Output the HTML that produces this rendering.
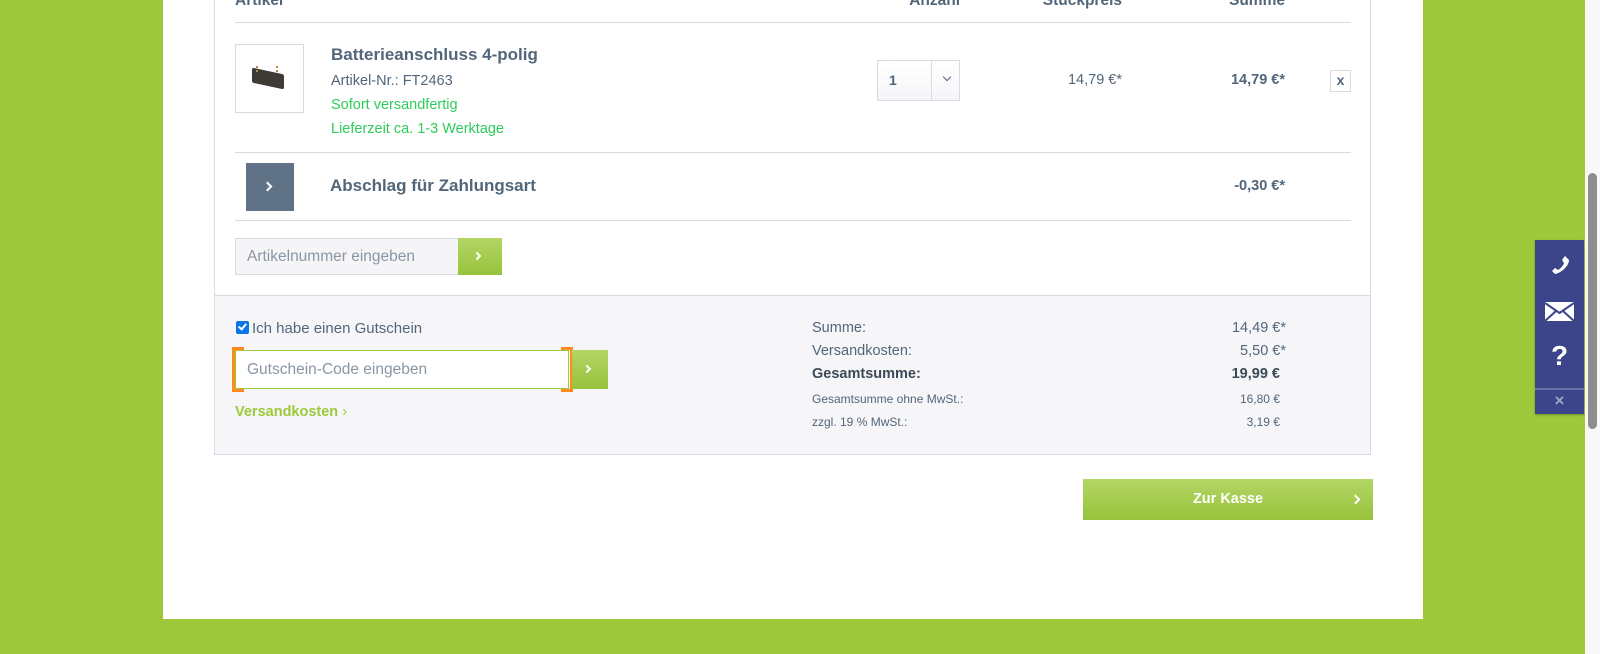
<!DOCTYPE html>
<html><head><meta charset="utf-8"><style>
*{box-sizing:border-box;margin:0;padding:0}
body{width:1600px;height:654px;overflow:hidden;background:#9cc83a;font-family:"Liberation Sans",Arial,sans-serif;color:#52667a;position:relative}
.a{position:absolute}
.panel{left:163px;top:0;width:1260px;height:619px;background:#fff}
.box{left:214px;top:-2px;width:1157px;height:457px;border:1px solid #dadae5;border-top:none}
.foot{left:215px;top:295px;width:1155px;height:159px;background:#f6f6f9;border-top:1px solid #dadae5}
.line{height:1px;background:#dadae5;left:235px;width:1116px}
.hd{font-weight:bold;font-size:15.5px;color:#52667a;top:-8px}
.r{text-align:right}
.btn{background:linear-gradient(#b3d666,#98c23b);color:#fff}
.chev{display:block;width:7px;height:7px;border-right:2px solid #fff;border-top:2px solid #fff;transform:rotate(45deg)}
</style></head><body>
<div class="a panel"></div>
<div class="a box"></div>
<div class="a foot"></div>

<div class="a hd" style="left:235px">Artikel</div>
<div class="a hd r" style="left:850px;width:110px">Anzahl</div>
<div class="a hd r" style="left:990px;width:132px">Stückpreis</div>
<div class="a hd r" style="left:1170px;width:115px">Summe</div>
<div class="a line" style="top:22px"></div>

<div class="a" style="left:235px;top:44px;width:69px;height:69px;border:1px solid #dadae5;background:#fff">
<div class="a" style="left:16px;top:26px;width:32px;height:15px;background:#3e3a36;transform:skewY(12deg);border-radius:2px"></div>
<div class="a" style="left:20px;top:21px;width:22px;height:6px;border-left:2px dotted #b08a50;border-right:2px dotted #b08a50"></div>
</div>
<div class="a" style="left:331px;top:45px;font-size:17px;font-weight:bold">Batterieanschluss 4-polig</div>
<div class="a" style="left:331px;top:73px;font-size:14.5px">Artikel-Nr.: FT2463</div>
<div class="a" style="left:331px;top:97px;font-size:14.5px;color:#2ecc5a">Sofort versandfertig</div>
<div class="a" style="left:331px;top:121px;font-size:14.5px;color:#2ecc5a">Lieferzeit ca. 1-3 Werktage</div>

<div class="a" style="left:877px;top:60px;width:83px;height:41px;border:1px solid #dadae5;background:linear-gradient(#fff,#f5f5f8)">
<div class="a" style="left:11px;top:11px;font-size:14px;font-weight:bold">1</div>
<div class="a" style="left:53px;top:0;width:1px;height:39px;background:#dadae5"></div>
<div class="a" style="left:66px;top:13px;width:6px;height:6px;border-right:1.5px solid #52667a;border-bottom:1.5px solid #52667a;transform:rotate(45deg)"></div>
</div>
<div class="a r" style="left:1000px;width:122px;top:72px;font-size:14.5px">14,79 €*</div>
<div class="a r" style="left:1160px;width:125px;top:72px;font-size:14.5px;font-weight:bold">14,79 €*</div>
<div class="a" style="left:1330px;top:70px;width:21px;height:22px;border:1px solid #dadae5;text-align:center;font-size:14px;font-weight:bold;line-height:19px">x</div>

<div class="a line" style="top:152px"></div>
<div class="a" style="left:246px;top:163px;width:48px;height:48px;background:#5f7286"><span class="chev a" style="left:18px;top:20px"></span></div>
<div class="a" style="left:330px;top:176px;font-size:17px;font-weight:bold">Abschlag für Zahlungsart</div>
<div class="a r" style="left:1160px;width:125px;top:178px;font-size:14.5px;font-weight:bold">-0,30 €*</div>
<div class="a line" style="top:220px"></div>

<div class="a" style="left:235px;top:238px;width:223px;height:37px;background:#f5f5f8;border:1px solid #dadae5;border-right:none;font-size:15.5px;color:#8a96a4;padding:9px 0 0 11px">Artikelnummer eingeben</div>
<div class="a btn" style="left:458px;top:238px;width:44px;height:37px"><span class="chev a" style="left:16px;top:15px;width:6px;height:6px"></span></div>

<div class="a" style="left:236px;top:321px;width:13px;height:13px;background:#0b75e8;border-radius:2px"><div class="a" style="left:4px;top:1px;width:5px;height:8px;border-right:2px solid #fff;border-bottom:2px solid #fff;transform:rotate(40deg)"></div></div>
<div class="a" style="left:252px;top:320px;font-size:15px">Ich habe einen Gutschein</div>
<div class="a" style="left:235px;top:350px;width:334px;height:39px;background:#fff;border:1px solid #9cc83a;font-size:15.5px;color:#8a96a4;padding:10px 0 0 11px">Gutschein-Code eingeben</div>
<div class="a" style="left:232px;top:347px;width:12px;height:45px;border:3px solid #ff8a1f;border-right:none;clip-path:polygon(0 0,100% 0,100% 4px,4px 4px,4px calc(100% - 4px),100% calc(100% - 4px),100% 100%,0 100%)"></div>
<div class="a" style="left:561px;top:347px;width:12px;height:45px;border:3px solid #ff8a1f;border-left:none;clip-path:polygon(0 0,100% 0,100% 100%,0 100%,0 calc(100% - 4px),8px calc(100% - 4px),8px 4px,0 4px)"></div>
<div class="a btn" style="left:572px;top:350px;width:36px;height:39px"><span class="chev a" style="left:12px;top:16px;width:6px;height:6px"></span></div>
<div class="a" style="left:235px;top:404px;font-size:14.5px;font-weight:bold;color:#9cc83a">Versandkosten <span style="font-weight:normal">›</span></div>

<div class="a" style="left:812px;top:320px;font-size:14.5px">Summe:</div>
<div class="a" style="left:812px;top:343px;font-size:14.5px">Versandkosten:</div>
<div class="a" style="left:812px;top:366px;font-size:14.5px;font-weight:bold;color:#3c4a58">Gesamtsumme:</div>
<div class="a" style="left:812px;top:392px;font-size:12px">Gesamtsumme ohne MwSt.:</div>
<div class="a" style="left:812px;top:415px;font-size:12px">zzgl. 19 % MwSt.:</div>
<div class="a r" style="left:1160px;width:126px;top:320px;font-size:14.5px">14,49 €*</div>
<div class="a r" style="left:1160px;width:126px;top:343px;font-size:14.5px">5,50 €*</div>
<div class="a r" style="left:1160px;width:120px;top:366px;font-size:14.5px;font-weight:bold;color:#3c4a58">19,99 €</div>
<div class="a r" style="left:1160px;width:120px;top:392px;font-size:12px">16,80 €</div>
<div class="a r" style="left:1160px;width:120px;top:415px;font-size:12px">3,19 €</div>

<div class="a btn" style="left:1083px;top:479px;width:290px;height:41px;text-align:center;font-size:14.5px;font-weight:bold;line-height:41px">Zur Kasse<span class="chev a" style="left:269px;top:17px;width:7px;height:7px"></span></div>

<div class="a" style="left:1535px;top:240px;width:49px;height:174px;background:#3c448a;box-shadow:0 1px 2px rgba(0,0,0,.3)">
<svg class="a" style="left:13px;top:13px" width="24" height="24" viewBox="0 0 24 24"><path d="M17 3 l4 4 c0 6 -8 13 -14 14 l-3 -3 l3-3 l3 2 c3-2 5-4 6-7 l-2-3z" fill="#fff"/></svg>
<svg class="a" style="left:10px;top:62px" width="29" height="19" viewBox="0 0 29 19"><rect width="29" height="19" fill="#fff"/><path d="M0 1 L14.5 11 L29 1 M0 19 L11 9 M29 19 L18 9" stroke="#3c448a" stroke-width="2" fill="none"/></svg>
<div class="a" style="left:0;width:49px;top:100px;text-align:center;color:#fff;font-size:28px;font-weight:bold">?</div>
<div class="a" style="left:0;top:148px;width:49px;height:2px;background:#6a72aa"></div>
<div class="a" style="left:0;width:49px;top:151px;text-align:center;color:#9da3cc;font-size:17px;font-weight:bold">×</div>
</div>

<div class="a" style="left:1585px;top:0;width:15px;height:654px;background:#f8f8f8"></div>
<div class="a" style="left:1588px;top:173px;width:9px;height:256px;background:#8e8e8e;border-radius:5px"></div>
</body></html>
